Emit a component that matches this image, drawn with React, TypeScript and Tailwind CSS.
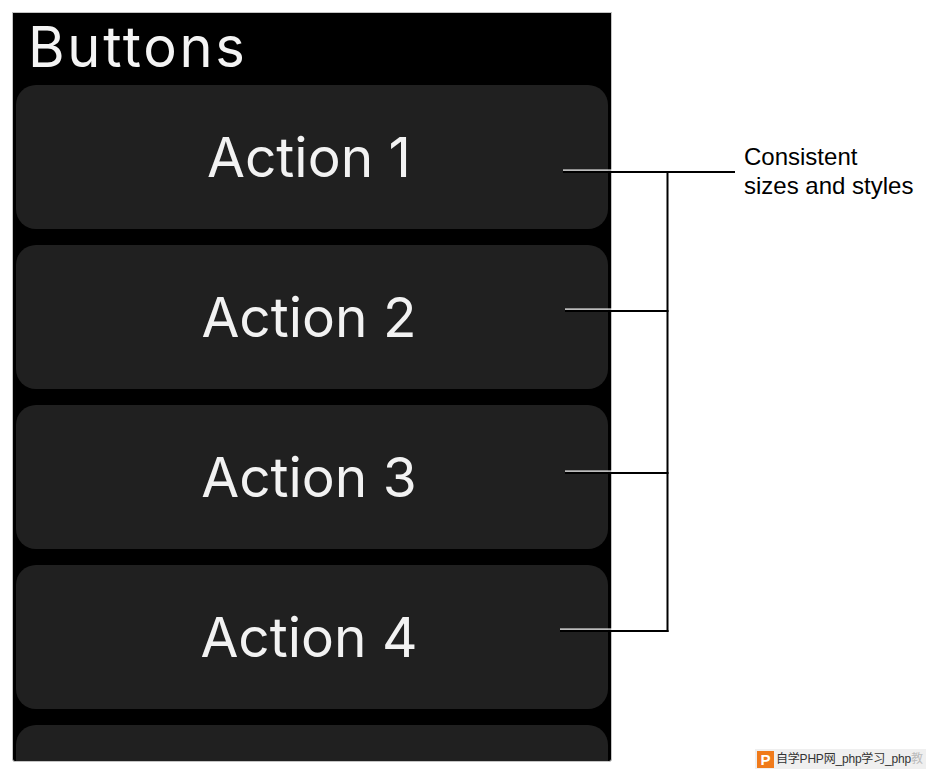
import React from "react";

const actions = ["Action 1", "Action 2", "Action 3", "Action 4", ""];

// leader lines: y position and left start of each tick
const ticks = [
  { y: 171, x: 563 },
  { y: 310, x: 565 },
  { y: 472, x: 565 },
  { y: 630, x: 560 },
];

const Callout: React.FC = () => {
  return (
    <svg
      className="absolute left-0 top-0 pointer-events-none"
      width={926}
      height={774}
      viewBox="0 0 926 774"
    >
      {ticks.map((t) => (
        <g key={t.y}>
          <rect x={t.x} y={t.y - 1.5} width={612 - t.x} height={1.2} fill="#ffffff" />
          <rect x={t.x} y={t.y} width={t.y === 171 ? 735 - t.x : 668.5 - t.x} height={2} fill="#000000" />
        </g>
      ))}
      <rect x={666.5} y={171} width={2} height={461} fill="#000000" />
    </svg>
  );
};

const WatchButton: React.FC<{ label: string }> = ({ label }) => {
  return (
    <div className="h-[144px] shrink-0 rounded-[20px] bg-[#202020] flex items-center justify-center pr-[6px]">
      <span className="text-[55px] leading-none text-[#f2f2f2] font-['Inter',sans-serif]">
        {label}
      </span>
    </div>
  );
};

export default function App() {
  return (
    <div className="relative w-[926px] h-[774px] bg-white overflow-hidden">
      <div className="flex items-start pt-[12px] pl-[12px]">
        <div className="w-[600px] h-[750px] border border-[#c4c4c4] bg-black rounded-b-[3px] overflow-hidden flex flex-col">
          <div className="h-[72px] shrink-0 pl-[15px] flex items-center">
            <h1 className="text-[56px] leading-none text-[#f4f4f4] font-['Inter',sans-serif] tracking-[2.7px] -mt-[4px]">
              Buttons
            </h1>
          </div>
          <div className="flex flex-col gap-[16px] px-[3px]">
            {actions.map((a, i) => (
              <WatchButton key={i} label={a} />
            ))}
          </div>
        </div>
        <div className="ml-[132px] mt-[130px] text-[24px] leading-[29px] text-black font-['Liberation_Sans',Arial,sans-serif]">
          <p>Consistent</p>
          <p>sizes and styles</p>
        </div>
      </div>

      <Callout />

      <div className="absolute left-[755px] top-[749px] w-[171px] h-[20px] bg-[#efefef] flex items-center overflow-hidden">
        <div className="ml-[2px] shrink-0 w-[17px] h-[17px] bg-[#f07a1a] flex items-center justify-center">
          <span className="text-white text-[15px] leading-none font-bold font-['Liberation_Sans',sans-serif]">P</span>
        </div>
        <span className="ml-[2px] whitespace-nowrap text-[12px] leading-none tracking-[-0.2px] text-[#333] font-['Liberation_Sans','Noto_Sans_CJK_SC',sans-serif]">
          自学PHP网_php学习_php<span className="text-[#bbb]">教</span>
        </span>
      </div>
    </div>
  );
}
